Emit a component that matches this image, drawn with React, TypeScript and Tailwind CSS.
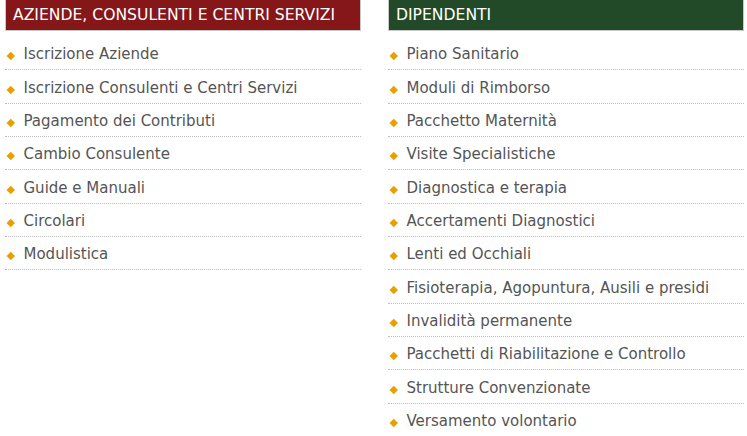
const aziende = [
  'Iscrizione Aziende',
  'Iscrizione Consulenti e Centri Servizi',
  'Pagamento dei Contributi',
  'Cambio Consulente',
  'Guide e Manuali',
  'Circolari',
  'Modulistica',
]

const dipendenti = [
  'Piano Sanitario',
  'Moduli di Rimborso',
  'Pacchetto Maternità',
  'Visite Specialistiche',
  'Diagnostica e terapia',
  'Accertamenti Diagnostici',
  'Lenti ed Occhiali',
  'Fisioterapia, Agopuntura, Ausili e presidi',
  'Invalidità permanente',
  'Pacchetti di Riabilitazione e Controllo',
  'Strutture Convenzionate',
  'Versamento volontario',
]

function Box({ title, color, items }: { title: string; color: string; items: string[] }) {
  return (
    <div className="w-[356px]">
      <div
        className={`h-[31px] border border-t-0 border-[#c8c8c8] ${color} pl-[7px] text-[15.6px] leading-[30px] text-white`}
      >
        {title}
      </div>
      <ul className="mt-[6px]">
        {items.map((item) => (
          <li
            key={item}
            className="flex h-[33.33px] items-center gap-[10.5px] border-b border-dotted border-[#bdbdbd] pt-[3px] text-[15px] text-[#555]"
          >
            <span className="ml-[2.5px] mt-[3px] h-[5.5px] w-[5.5px] shrink-0 rotate-45 bg-[#e8a000]" />
            {item}
          </li>
        ))}
      </ul>
    </div>
  )
}

export default function App() {
  return (
    <div className="flex gap-[27px] bg-white pl-[5px] font-['DejaVu_Sans',Verdana,sans-serif]">
      <Box title="AZIENDE, CONSULENTI E CENTRI SERVIZI" color="bg-[#861719]" items={aziende} />
      <Box title="DIPENDENTI" color="bg-[#234a28]" items={dipendenti} />
    </div>
  )
}
